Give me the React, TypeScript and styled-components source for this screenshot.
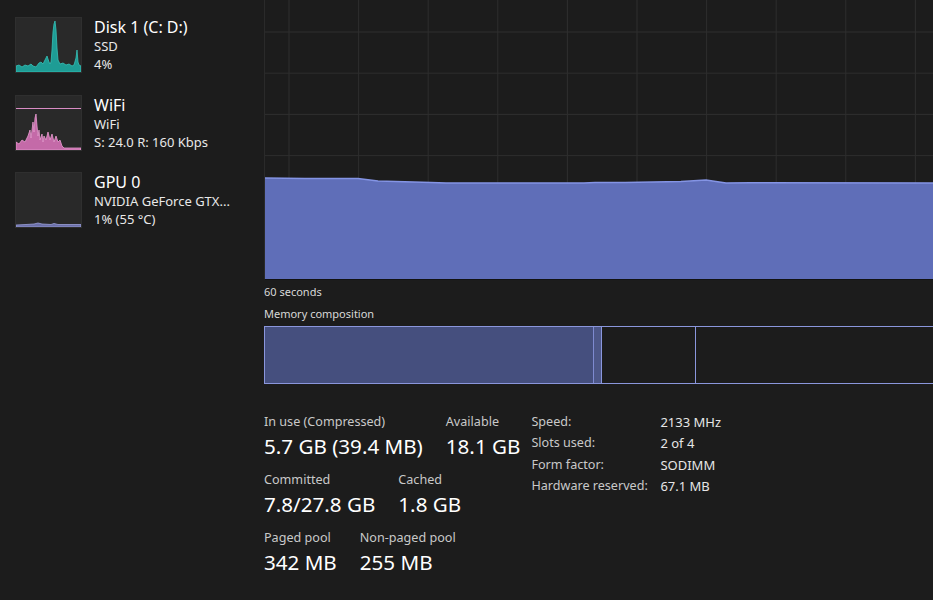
import React from "react";
import styled, { createGlobalStyle } from "styled-components";

const Global = createGlobalStyle`
  html, body { margin: 0; padding: 0; background: #1c1c1c; }
  body { font-family: "Segoe UI", "Noto Sans", "Open Sans", sans-serif; color: #ffffff; overflow: hidden; }
`;

const Page = styled.div`
  display: flex;
  width: 933px;
  height: 600px;
  background: #1c1c1c;
  overflow: hidden;
`;

const Sidebar = styled.div`
  width: 264px;
  flex: none;
  display: flex;
  flex-direction: column;
  padding: 17px 0 0 15px;
  box-sizing: border-box;
  gap: 21.5px;
`;

const Item = styled.div`
  display: flex;
  gap: 12px;
  height: 56px;
`;

const Thumb = styled.div`
  width: 67px;
  height: 56px;
  flex: none;
  background: #292929;
  box-sizing: border-box;
  border: 1px solid #2f2f2f;
`;

const ItemText = styled.div`
  display: flex;
  flex-direction: column;
`;

const ItemTitle = styled.div`
  font-size: 16px;
  line-height: 20px;
  color: #ffffff;
`;

const ItemSub = styled.div`
  font-size: 13px;
  line-height: 18px;
  color: #e8e8e8;
  white-space: nowrap;
`;

const Main = styled.div`
  flex: 1;
  display: flex;
  flex-direction: column;
  min-width: 0;
`;

const Chart = styled.div`
  height: 280px;
  overflow: hidden;
  border-left: 1px solid #2a2a2a;
  border-bottom: 1px solid #121212;
  box-sizing: border-box;
`;

const ChartSvg = styled.svg`
  display: block;
  width: 669px;
  height: 279px;
`;

const Caption = styled.div`
  font-size: 11px;
  line-height: 14px;
  color: #d8d8d8;
  padding-top: 5px;
`;

const Caption2 = styled(Caption)`
  padding-top: 8px;
`;

const CompBar = styled.div`
  margin-top: 5px;
  height: 58px;
  display: flex;
  box-sizing: border-box;
  border: 1px solid #8a96dc;
  border-right: none;
`;

const Seg = styled.div<{ $w: number; $fill?: boolean; $last?: boolean }>`
  width: ${(p) => p.$w}px;
  flex: ${(p) => (p.$last ? "1" : "none")};
  box-sizing: border-box;
  background: ${(p) => (p.$fill ? "#454f7e" : "#1c1c1c")};
  border-right: ${(p) => (p.$last ? "none" : "1px solid #8a96dc")};
`;

const ModSeg = styled.div`
  width: 9px;
  flex: none;
  box-sizing: border-box;
  background: #4d5788;
  border-left: 1px solid #7e8ad0;
  border-right: 1px solid #8a96dc;
  margin-left: -1px;
`;

const Stats = styled.div`
  display: flex;
  gap: 11px;
  margin-top: 29px;
`;

const LeftStats = styled.div`
  display: flex;
  flex-direction: column;
  gap: 9px;
`;

const StatRow = styled.div`
  display: flex;
  gap: 23px;
`;

const Stat = styled.div`
  display: flex;
  flex-direction: column;
`;

const Label = styled.div`
  font-size: 12.6px;
  line-height: 18px;
  color: #c9c9c9;
  white-space: nowrap;
`;

const Value = styled.div`
  font-size: 20.6px;
  line-height: 31px;
  color: #ffffff;
  white-space: nowrap;
`;

const InfoTable = styled.div`
  display: grid;
  grid-template-columns: 129px auto;
  row-gap: 3.3px;
  align-content: start;
`;

const InfoLabel = styled.div`
  font-size: 12.6px;
  line-height: 18px;
  color: #c9c9c9;
  white-space: nowrap;
`;

const InfoValue = styled.div`
  font-size: 13px;
  line-height: 18px;
  color: #e6e6e6;
  white-space: nowrap;
`;

const DiskSpark = () => (
  <svg width="65" height="54" viewBox="0 0 65 54">
    <path
      d="M0 54 L0 48 L3 47 L6 49 L9 47 L12 48 L15 46 L17 48 L20 49 L23 45 L25 44 L27 46 L29 42 L31 38 L33 44 L34 46 L35 44 L36 32 L37 14 L38 6 L39 3 L40 12 L41 30 L42 42 L44 46 L47 45 L50 47 L53 46 L56 48 L58 47 L60 40 L61 32 L62 44 L63 47 L65 48 L65 54 Z"
      fill="#1e9c95"
      stroke="#35c2b8"
      strokeWidth="0.8"
    />
  </svg>
);

const WifiSpark = () => (
  <svg width="65" height="54" viewBox="0 0 65 54">
    <line x1="0" y1="12.5" x2="65" y2="12.5" stroke="#d98cc4" strokeWidth="1" />
    <path
      d="M0 54 L0 46 L3 48 L6 44 L9 46 L12 40 L14 34 L15 42 L17 26 L18 36 L19 22 L20 18 L21 30 L22 40 L23 34 L24 44 L26 38 L27 46 L28 40 L30 44 L32 36 L34 44 L36 38 L38 46 L40 40 L42 46 L44 44 L46 50 L48 52 L65 52 L65 54 Z"
      fill="#c46aa8"
      stroke="#e89ad0"
      strokeWidth="0.8"
    />
  </svg>
);

const GpuSpark = () => (
  <svg width="65" height="54" viewBox="0 0 65 54">
    <path
      d="M0 54 L0 52 L10 51.5 L18 51 L22 50 L26 51 L35 51.5 L38 50.5 L42 51.5 L65 51.5 L65 54 Z"
      fill="#6b6fa8"
      stroke="#9aa0d8"
      strokeWidth="0.8"
    />
  </svg>
);

const vLines = [24, 93.6, 163.2, 232.8, 302.4, 372, 441.6, 511.2, 580.8, 650.4];
const hLines = [32, 73.2, 114.4, 155.6, 196.8, 238];

const linePath =
  "M0 178 L40 178.5 L93 178.5 L113 181 L166 182.5 L181 183 L319 183 L330 182.5 L360 182.5 L416 181.5 L441 180 L461 183 L486 182.8 L669 183";

const ChartArea = () => (
  <ChartSvg viewBox="0 0 669 279" preserveAspectRatio="none">
    {vLines.map((x) => (
      <line key={"v" + x} x1={x} y1={0} x2={x} y2={279} stroke="#2e2e2e" strokeWidth="1" />
    ))}
    {hLines.map((y) => (
      <line key={"h" + y} x1={0} y1={y} x2={669} y2={y} stroke="#2e2e2e" strokeWidth="1" />
    ))}
    <path d={linePath + " L669 279 L0 279 Z"} fill="#5f6eb8" />
    <path d={linePath} fill="none" stroke="#8494e4" strokeWidth="1.6" />
  </ChartSvg>
);

const items = [
  { title: "Disk 1 (C: D:)", sub1: "SSD", sub2: "4%", spark: <DiskSpark /> },
  { title: "WiFi", sub1: "WiFi", sub2: "S: 24.0  R: 160 Kbps", spark: <WifiSpark /> },
  { title: "GPU 0", sub1: "NVIDIA GeForce GTX...", sub2: "1%  (55 °C)", spark: <GpuSpark /> },
];

const rows = [
  [
    { l: "In use (Compressed)", v: "5.7 GB (39.4 MB)" },
    { l: "Available", v: "18.1 GB" },
  ],
  [
    { l: "Committed", v: "7.8/27.8 GB" },
    { l: "Cached", v: "1.8 GB" },
  ],
  [
    { l: "Paged pool", v: "342 MB" },
    { l: "Non-paged pool", v: "255 MB" },
  ],
];

const info = [
  ["Speed:", "2133 MHz"],
  ["Slots used:", "2 of 4"],
  ["Form factor:", "SODIMM"],
  ["Hardware reserved:", "67.1 MB"],
];

export default function App() {
  return (
    <>
      <Global />
      <Page>
        <Sidebar>
          {items.map((it) => (
            <Item key={it.title}>
              <Thumb>{it.spark}</Thumb>
              <ItemText>
                <ItemTitle>{it.title}</ItemTitle>
                <ItemSub>{it.sub1}</ItemSub>
                <ItemSub>{it.sub2}</ItemSub>
              </ItemText>
            </Item>
          ))}
        </Sidebar>
        <Main>
          <Chart>
            <ChartArea />
          </Chart>
          <Caption>60 seconds</Caption>
          <Caption2>Memory composition</Caption2>
          <CompBar>
            <Seg $w={329} $fill />
            <ModSeg />
            <Seg $w={94} />
            <Seg $w={0} $last />
          </CompBar>
          <Stats>
            <LeftStats>
              {rows.map((r, i) => (
                <StatRow key={i}>
                  {r.map((s) => (
                    <Stat key={s.l}>
                      <Label>{s.l}</Label>
                      <Value>{s.v}</Value>
                    </Stat>
                  ))}
                </StatRow>
              ))}
            </LeftStats>
            <InfoTable>
              {info.map(([l, v]) => (
                <React.Fragment key={l}>
                  <InfoLabel>{l}</InfoLabel>
                  <InfoValue>{v}</InfoValue>
                </React.Fragment>
              ))}
            </InfoTable>
          </Stats>
        </Main>
      </Page>
    </>
  );
}
